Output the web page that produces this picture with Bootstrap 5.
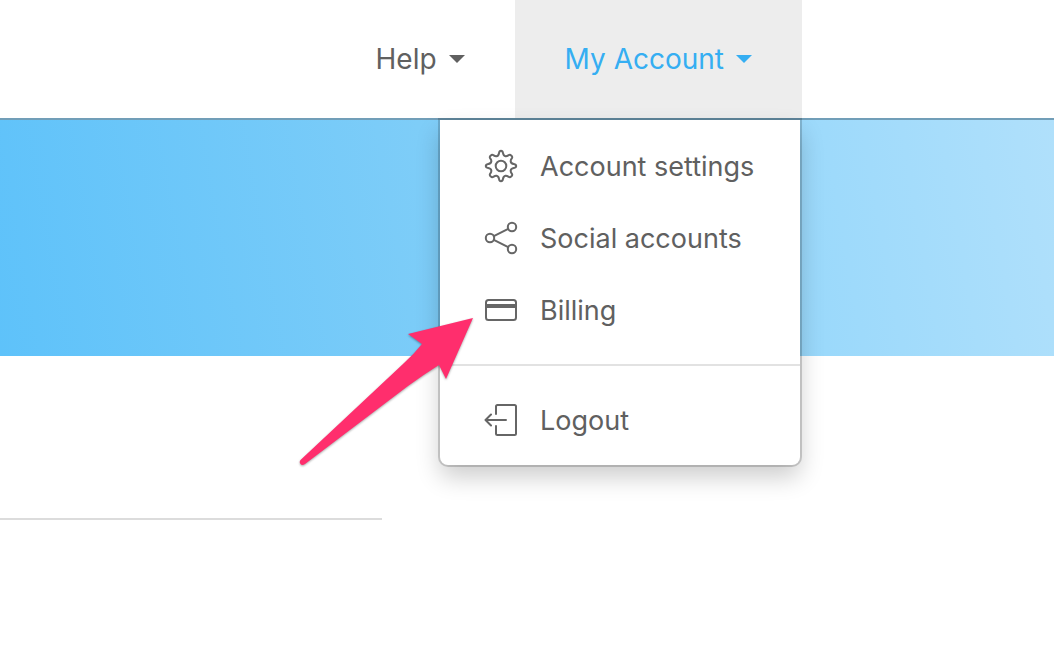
<!DOCTYPE html>
<html lang="en">
<head>
<meta charset="utf-8">
<meta name="viewport" content="width=device-width, initial-scale=1">
<title>My Account</title>
<link href="https://cdn.jsdelivr.net/npm/bootstrap@5.3.0/dist/css/bootstrap.min.css" rel="stylesheet">
<style>
  body { font-family: Inter, "Liberation Sans", sans-serif; color: #606060; background: #fff; }
  .topbar { padding-right: 252px; border-bottom: 2px solid #719eb8; }
  .topbar .nav-link { height: 118px; padding: 0 50px; font-size: 28px; line-height: 36px; color: #606060; }
  .topbar .nav-link.show { background: #ededed; color: #35aef2; }
  .topbar .dropdown-toggle::after { margin-left: 12px; border-top: 8px solid; border-right: 8px solid transparent; border-left: 8px solid transparent; }
  .account-menu.dropdown-menu { top: 120px; right: 2px; width: 360px; padding: 11px 0 8px; font-size: 27px; line-height: 40px; color: #606060;
    border: 0; border-radius: 0 0 8px 8px;
    box-shadow: 0 0 0 2px rgba(0,0,0,.17), 0 12px 24px rgba(0,0,0,.2); }
  .account-menu .dropdown-item { height: 72px; gap: 22px; padding: 0 44px; color: #606060; }
  .account-menu .dropdown-divider { margin: 17px 0 19px; border-top: 2px solid #e2e2e2; opacity: 1; }
  .line-icon { width: 34px; height: 34px; flex: none; margin-bottom: 2px; fill: none; stroke: #666; stroke-width: 2; stroke-linecap: round; stroke-linejoin: round; }
  .pointer { top: 194px; left: -144px; width: 184px; height: 160px; pointer-events: none; filter: drop-shadow(0 1px 1px rgba(0,0,0,.35)); }
  .hero { height: 236px; background: linear-gradient(80deg, #5ec2fa, #7ecdf8 42%, #98d8fb 72%, #b0e0fb); }
  .section-rule { width: 36.25%; margin: 162px 0 0; border-top: 2px solid #dcdcdc; opacity: 1; }
</style>
</head>
<body>
<header>
  <nav class="topbar d-flex justify-content-end" aria-label="Main">
    <ul class="nav flex-nowrap">
      <li class="nav-item dropdown">
        <a class="nav-link dropdown-toggle d-flex align-items-center" href="#" role="button" data-bs-toggle="dropdown" aria-expanded="false">Help</a>
      </li>
      <li class="nav-item dropdown">
        <a class="nav-link dropdown-toggle show d-flex align-items-center" href="#" role="button" aria-expanded="true">My Account</a>
        <div class="account-menu dropdown-menu show">
          <a class="dropdown-item d-flex align-items-center" href="#">
            <svg class="line-icon" viewBox="0 0 34 34" aria-hidden="true"><circle cx="17" cy="17" r="5.3"/><path d="M15 4.2Q15.4 1.8 17 1.8T19 4.2Q19.5 7 21.5 7.3Q22.8 7.5 24.3 6.4Q26.2 5 27.3 6.7Q29 7.8 27.6 9.7Q26.5 11.2 26.7 12.5Q27 14.5 29.8 15Q32.2 15.4 32.2 17T29.8 19Q27 19.5 26.7 21.5Q26.5 22.8 27.6 24.3Q29 26.2 27.3 27.3Q26.2 29 24.3 27.6Q22.8 26.5 21.5 26.7Q19.5 27 19 29.8Q18.6 32.2 17 32.2T15 29.8Q14.5 27 12.5 26.7Q11.2 26.5 9.7 27.6Q7.8 29 6.7 27.3Q5 26.2 6.4 24.3Q7.5 22.8 7.3 21.5Q7 19.5 4.2 19Q1.8 18.6 1.8 17T4.2 15Q7 14.5 7.3 12.5Q7.5 11.2 6.4 9.7Q5 7.8 6.7 6.7Q7.8 5 9.7 6.4Q11.2 7.5 12.5 7.3Q14.5 7 15 4.2Z"/></svg>
            <span>Account settings</span>
          </a>
          <a class="dropdown-item d-flex align-items-center" href="#">
            <svg class="line-icon" viewBox="0 0 34 34" aria-hidden="true"><circle cx="6" cy="17" r="4.2"/><circle cx="28" cy="6" r="4.2"/><circle cx="28" cy="28" r="4.2"/><path d="M9.8 15.1 24.2 7.9M9.8 18.9 24.2 26.1"/></svg>
            <span>Social accounts</span>
          </a>
          <a class="dropdown-item d-flex align-items-center" href="#">
            <svg class="line-icon" viewBox="0 0 34 34" aria-hidden="true"><rect x="2" y="7" width="30" height="20" rx="2.5"/><path d="M2 13H32" stroke-width="4" stroke-linecap="butt"/></svg>
            <span>Billing</span>
          </a>
          <hr class="dropdown-divider">
          <a class="dropdown-item d-flex align-items-center" href="#">
            <svg class="line-icon" viewBox="0 0 34 34" aria-hidden="true"><path d="M12 11V3.5Q12 2 13.5 2H30.5Q32 2 32 3.5V30.5Q32 32 30.5 32H13.5Q12 32 12 30.5V23M22 17H1.5M7 11.5 1.5 17 7 22.5"/></svg>
            <span>Logout</span>
          </a>
          <svg class="pointer position-absolute" viewBox="0 0 184 160" aria-hidden="true"><path fill="#ff2e6d" d="M177 4 112 20 126 30Q118 40 107 50L4.500 146Q3 148 4.500 150Q6 152 9 150L112 72Q127 61 143 51L150 65Z"/></svg>
        </div>
      </li>
    </ul>
  </nav>
</header>
<main>
  <div class="hero"></div>
  <hr class="section-rule">
</main>
<script src="https://cdn.jsdelivr.net/npm/bootstrap@5.3.0/dist/js/bootstrap.bundle.min.js"></script>
</body>
</html>
